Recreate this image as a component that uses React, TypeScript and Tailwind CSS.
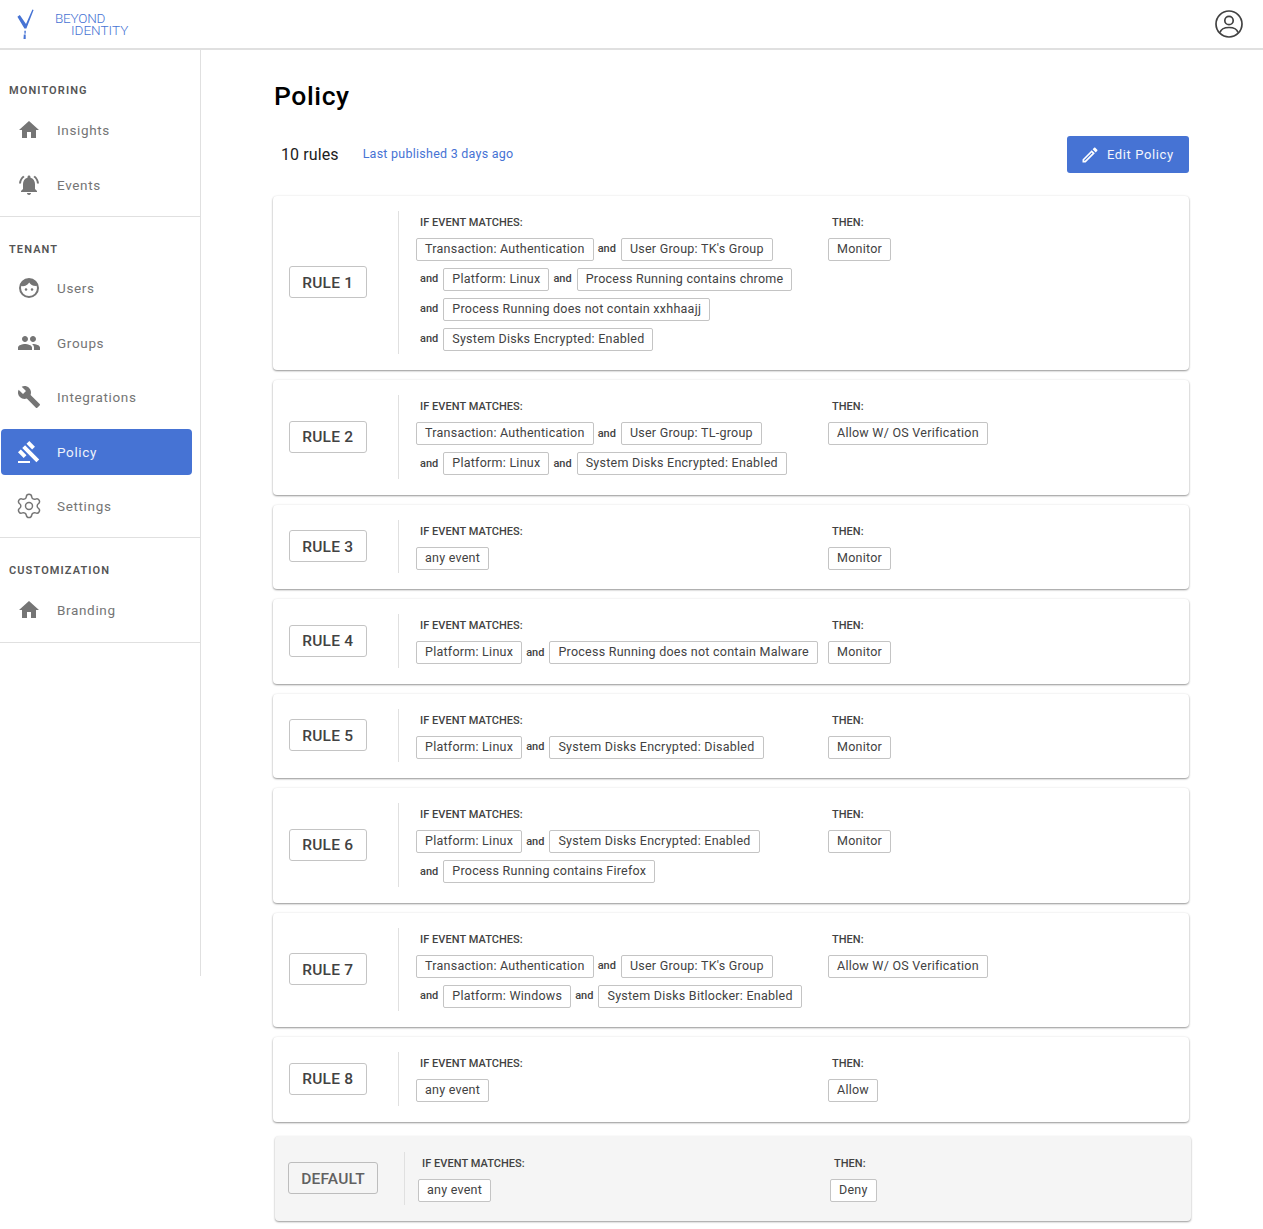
import {
  MdBuild,
  MdGavel,
  MdHome,
  MdNotificationsActive,
  MdOutlineEdit,
  MdPeople,
} from 'react-icons/md';
import { Settings } from 'lucide-react';
import type { ComponentType } from 'react';

type Rule = { name: string; rows: string[][]; then: string };

const rules: Rule[] = [
  {
    name: 'RULE 1',
    rows: [
      ['Transaction: Authentication', "User Group: TK's Group"],
      ['Platform: Linux', 'Process Running contains chrome'],
      ['Process Running does not contain xxhhaajj'],
      ['System Disks Encrypted: Enabled'],
    ],
    then: 'Monitor',
  },
  {
    name: 'RULE 2',
    rows: [
      ['Transaction: Authentication', 'User Group: TL-group'],
      ['Platform: Linux', 'System Disks Encrypted: Enabled'],
    ],
    then: 'Allow W/ OS Verification',
  },
  { name: 'RULE 3', rows: [['any event']], then: 'Monitor' },
  { name: 'RULE 4', rows: [['Platform: Linux', 'Process Running does not contain Malware']], then: 'Monitor' },
  { name: 'RULE 5', rows: [['Platform: Linux', 'System Disks Encrypted: Disabled']], then: 'Monitor' },
  {
    name: 'RULE 6',
    rows: [['Platform: Linux', 'System Disks Encrypted: Enabled'], ['Process Running contains Firefox']],
    then: 'Monitor',
  },
  {
    name: 'RULE 7',
    rows: [
      ['Transaction: Authentication', "User Group: TK's Group"],
      ['Platform: Windows', 'System Disks Bitlocker: Enabled'],
    ],
    then: 'Allow W/ OS Verification',
  },
  { name: 'RULE 8', rows: [['any event']], then: 'Allow' },
];

function Chip({ label }: { label: string }) {
  return (
    <span className="flex h-[23px] shrink-0 items-center whitespace-nowrap rounded-[2px] border border-[#c4c4c4] bg-white px-2 text-[12.5px] tracking-[0.25px] text-[#424242]">
      {label}
    </span>
  );
}

function And() {
  return <span className="mt-px mr-px shrink-0 text-[11px] font-medium text-[#424242]">and</span>;
}

function RuleCard({ rule, isDefault }: { rule: Rule; isDefault?: boolean }) {
  return (
    <div
      className={
        isDefault
          ? 'mt-[4px] ml-[2px] flex h-[85px] w-[916px] rounded-[4px] bg-[#f5f5f5] pt-[16px] pb-[16px] shadow-[0_1px_2px_rgba(0,0,0,0.4)]'
          : 'flex w-[916px] rounded-[4px] bg-white pt-[15px] pb-[16px] shadow-[0_1px_2px_rgba(0,0,0,0.4),0_0_3px_rgba(0,0,0,0.06)]'
      }
    >
      <div
        className={
          isDefault
            ? 'ml-[13px] flex w-[90px] shrink-0 items-center justify-center'
            : 'flex w-[108px] shrink-0 items-center justify-center pl-[1.5px]'
        }
      >
        <span
          className={
            isDefault
              ? 'flex h-[32px] w-[90px] items-center justify-center rounded-[3px] border border-[#bdbdbd] pt-[2px] text-[15.5px] font-medium tracking-[0.2px] text-[#616161]'
              : 'flex h-[32px] items-center justify-center whitespace-nowrap rounded-[3px] border border-[#c4c4c4] px-[12.5px] pt-[2px] text-[15.5px] font-medium tracking-[0.2px] text-[#424242]'
          }
        >
          {rule.name}
        </span>
      </div>
      <div className={isDefault ? 'ml-[26px] w-px shrink-0 bg-[#e0e0e0]' : 'ml-[17px] w-px shrink-0 bg-[#e0e0e0]'} />
      <div className={isDefault ? 'ml-[13px] w-[412px] shrink-0' : 'ml-[17px] w-[412px] shrink-0 pb-[3.5px]'}>
        <div className="mb-[6px] pt-[2px] pl-1 text-[11px] leading-[19px] font-medium tracking-[0.05px] text-[#424242]">
          IF EVENT MATCHES:
        </div>
        <div className="flex flex-col gap-[7px]">
          {rule.rows.map((row, i) => (
            <div key={i} className={i === 0 ? 'flex items-center gap-1' : 'flex items-center gap-1 pl-1'}>
              {row.map((label, j) => (
                <div key={label} className="flex items-center gap-1">
                  {(i > 0 || j > 0) && <And />}
                  <Chip label={label} />
                </div>
              ))}
            </div>
          ))}
        </div>
      </div>
      <div>
        <div className="mb-[6px] pt-[2px] pl-1 text-[11px] leading-[19px] font-medium tracking-[0.05px] text-[#424242]">THEN:</div>
        <div className="flex">
          <Chip label={rule.then} />
        </div>
      </div>
    </div>
  );
}

function NavItem({
  icon: Icon,
  label,
  active,
}: {
  icon: ComponentType<{ className?: string }>;
  label: string;
  active?: boolean;
}) {
  return (
    <div className="flex h-[54.5px] items-center">
      <div
        className={
          active
            ? 'ml-px flex h-[46px] w-[191px] items-center rounded-[4px] bg-[#4673d4] pl-[16px] text-[#eef2fb]'
            : 'ml-px flex h-[46px] w-[191px] items-center pl-[16px] text-[#757575]'
        }
      >
        <Icon className={active ? 'h-6 w-6 text-white' : 'h-6 w-6 text-[#757575]'} />
        <span className="ml-[16px] text-[13.5px] tracking-[0.65px]">{label}</span>
      </div>
    </div>
  );
}

function GearIcon() {
  return <Settings className="-mx-[2px] h-[28px] w-[28px] shrink-0 text-[#757575]" strokeWidth={1.25} />;
}

function FaceIcon({ className }: { className?: string }) {
  return (
    <svg viewBox="0 0 24 24" className={className}>
      <circle cx="12" cy="12" r="9" fill="none" stroke="currentColor" strokeWidth="2" />
      <path d="M12 3a9 9 0 0 0-8.6 6.4c1.2.9 3.2 1 5 .3 1.9-.8 3.200-2.100 3.800-3.200 1.200 2.200 4 3.800 8.400 3.300A9 9 0 0 0 12 3Z" fill="currentColor" />
      <circle cx="9" cy="13.500" r="1.250" fill="currentColor" />
      <circle cx="15" cy="13.500" r="1.250" fill="currentColor" />
    </svg>
  );
}

function SectionLabel({ children }: { children: string }) {
  return <div className="pt-px pl-[9px] text-[11px] leading-[19px] font-semibold tracking-[1.1px] text-[#555555]">{children}</div>;
}

function Logo() {
  return (
    <div className="flex items-center">
      <svg width="20" height="30" viewBox="0 0 20 30" className="ml-[16px]" fill="#4673d4">
        <path d="M1.400 7.800 3.800 6 10 15 16.400 0.400 17.600 1 10.400 19.600 8.400 19.600Z" />
        <path d="M8.300 21.800h1.600l-.3 3h-1.100ZM7.800 25.600h1.900V30H7.500Z" />
      </svg>
      <div className="ml-[19px] text-[13.5px] leading-[12px] font-light text-[#4673d4]">
        <div className="tracking-[-0.2px]">BEYOND</div>
        <div className="ml-[16px]">IDENTITY</div>
      </div>
    </div>
  );
}

function AccountIcon() {
  return (
    <svg width="30" height="30" viewBox="0 0 30 30" fill="none" stroke="#424242" strokeWidth="1.7" className="mr-[19px]">
      <circle cx="15" cy="15" r="13" />
      <circle cx="15" cy="11.500" r="4.200" />
      <path d="M6 23.500c1-3.600 5-5 9-5s8 1.400 9 5" />
    </svg>
  );
}

export default function App() {
  return (
    <div className="min-h-[1229px] bg-white font-['Roboto','Liberation_Sans',sans-serif]">
      <header className="flex h-[50px] items-center justify-between border-b-2 border-[#e0e0e0]">
        <Logo />
        <AccountIcon />
      </header>
      <div className="flex items-start">
        <aside className="h-[926px] w-[201px] shrink-0 border-r border-[#e0e0e0]">
          <div className="border-b border-[#e0e0e0] pt-[30px] pb-[4px]">
            <SectionLabel>MONITORING</SectionLabel>
            <div className="mt-[3px]">
              <NavItem icon={MdHome} label="Insights" />
              <NavItem icon={MdNotificationsActive} label="Events" />
            </div>
          </div>
          <div className="border-b border-[#e0e0e0] pt-[22px] pb-[3px]">
            <SectionLabel>TENANT</SectionLabel>
            <div className="mt-[2px]">
              <NavItem icon={FaceIcon} label="Users" />
              <NavItem icon={MdPeople} label="Groups" />
              <NavItem icon={MdBuild} label="Integrations" />
              <NavItem icon={MdGavel} label="Policy" active />
              <NavItem icon={GearIcon} label="Settings" />
            </div>
          </div>
          <div className="border-b border-[#e0e0e0] pt-[22px] pb-[5px]">
            <SectionLabel>CUSTOMIZATION</SectionLabel>
            <div className="mt-[3px]">
              <NavItem icon={MdHome} label="Branding" />
            </div>
          </div>
        </aside>
        <main className="ml-[72px] w-[918px] pt-[29px]">
          <h1 className="ml-px text-[26.5px] leading-[33px] font-medium tracking-[0.6px] text-black">Policy</h1>
          <div className="mt-[24px] flex h-[37px] w-[916px] items-center">
            <span className="ml-[8px] text-[16px] tracking-[0.1px] text-[#212121]">10 rules</span>
            <span className="ml-[24px] text-[12.5px] tracking-[0.25px] text-[#4673d4]">Last published 3 days ago</span>
            <button className="ml-auto flex h-[37px] w-[122px] items-center rounded-[3px] bg-[#4673d4] pl-[13px] text-[13px] tracking-[0.6px] text-[#f4f6fc]">
              <MdOutlineEdit className="h-[20px] w-[20px] text-white" />
              <span className="ml-[7px]">Edit Policy</span>
            </button>
          </div>
          <div className="mt-[22.7px] flex flex-col gap-[10px]">
            {rules.map((rule) => (
              <RuleCard key={rule.name} rule={rule} />
            ))}
            <RuleCard rule={{ name: 'DEFAULT', rows: [['any event']], then: 'Deny' }} isDefault />
          </div>
        </main>
      </div>
    </div>
  );
}
